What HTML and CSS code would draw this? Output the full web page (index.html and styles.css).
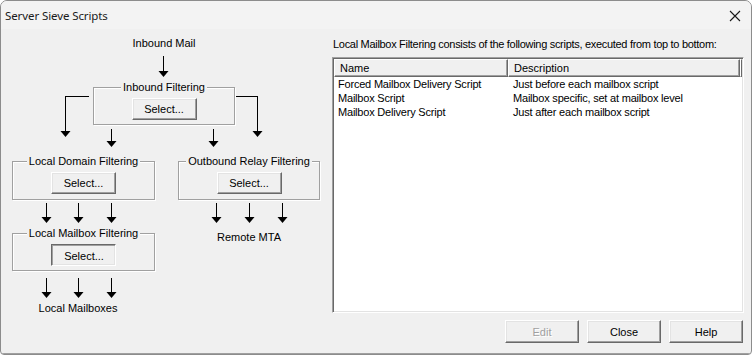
FILE: index.html
```html
<!DOCTYPE html>
<html lang="en">
<head>
    <meta charset="UTF-8">
    <title>Server Sieve Scripts</title>
    <link rel="stylesheet" href="styles.css">
</head>
<body>
    <div class="window">
        <div class="titlebar">
            <span class="title">Server Sieve Scripts</span>
            <svg class="close-x" width="12" height="12" viewBox="0 0 12 12">
                <path d="M1 1 L11 11 M11 1 L1 11" stroke="#1a1a1a" stroke-width="1.1" fill="none"/>
            </svg>
        </div>
        <div class="client">
            <!-- flow diagram -->
            <div class="diagram">
                <svg class="wires" width="323" height="325">
                    <g stroke="#000" stroke-width="1" fill="none" shape-rendering="crispEdges">
                        <path d="M162.5 27 V42"/>
                        <path d="M88 67.5 H64.5 V102"/>
                        <path d="M234 67.5 H256.5 V102"/>
                        <path d="M110.5 100 V112"/>
                        <path d="M212.5 100 V112"/>
                        <path d="M45.5 174 V188"/>
                        <path d="M77.5 174 V188"/>
                        <path d="M110.5 174 V188"/>
                        <path d="M215.5 174 V188"/>
                        <path d="M248.5 174 V188"/>
                        <path d="M281.5 174 V188"/>
                        <path d="M45.5 249 V263"/>
                        <path d="M77.5 249 V263"/>
                        <path d="M110.5 249 V263"/>
                    </g>
                    <g fill="#000">
                        <polygon points="157.5,42 167.5,42 162.5,48"/>
                        <polygon points="59.5,102 69.5,102 64.5,108"/>
                        <polygon points="251.5,102 261.5,102 256.5,108"/>
                        <polygon points="105.5,112 115.5,112 110.5,118"/>
                        <polygon points="207.5,112 217.5,112 212.5,118"/>
                        <polygon points="40.5,188 50.5,188 45.5,194"/>
                        <polygon points="72.5,188 82.5,188 77.5,194"/>
                        <polygon points="105.5,188 115.5,188 110.5,194"/>
                        <polygon points="210.5,188 220.5,188 215.5,194"/>
                        <polygon points="243.5,188 253.5,188 248.5,194"/>
                        <polygon points="276.5,188 286.5,188 281.5,194"/>
                        <polygon points="40.5,263 50.5,263 45.5,269"/>
                        <polygon points="72.5,263 82.5,263 77.5,269"/>
                        <polygon points="105.5,263 115.5,263 110.5,269"/>
                    </g>
                </svg>

                <div class="caption cap-inbound">Inbound Mail</div>

                <div class="group grp-inbound">
                    <div class="legend"><span>Inbound Filtering</span></div>
                    <button class="btn btn-select">Select...</button>
                </div>

                <div class="group grp-domain">
                    <div class="legend"><span>Local Domain Filtering</span></div>
                    <button class="btn btn-select">Select...</button>
                </div>

                <div class="group grp-relay">
                    <div class="legend"><span>Outbound Relay Filtering</span></div>
                    <button class="btn btn-select">Select...</button>
                </div>

                <div class="group grp-mailbox">
                    <div class="legend"><span>Local Mailbox Filtering</span></div>
                    <button class="btn btn-select pressed">Select...</button>
                </div>

                <div class="caption cap-remote">Remote MTA</div>
                <div class="caption cap-mailboxes">Local Mailboxes</div>
            </div>

            <!-- script list -->
            <div class="scripts">
                <p class="intro">Local Mailbox Filtering consists of the following scripts, executed from top to bottom:</p>
                <div class="listview">
                    <div class="lv-header">
                        <div class="lv-col col-name">Name</div>
                        <div class="lv-col col-desc">Description</div>
                        <div class="lv-col col-rest"></div>
                    </div>
                    <div class="lv-row">
                        <span class="col-name">Forced Mailbox Delivery Script</span>
                        <span class="col-desc">Just before each mailbox script</span>
                    </div>
                    <div class="lv-row">
                        <span class="col-name">Mailbox Script</span>
                        <span class="col-desc">Mailbox specific, set at mailbox level</span>
                    </div>
                    <div class="lv-row">
                        <span class="col-name">Mailbox Delivery Script</span>
                        <span class="col-desc">Just after each mailbox script</span>
                    </div>
                </div>
                <div class="actions">
                    <button class="btn btn-action" disabled>Edit</button>
                    <button class="btn btn-action">Close</button>
                    <button class="btn btn-action">Help</button>
                </div>
            </div>
        </div>
    </div>
</body>
</html>
```

FILE: styles.css
```css
body {
    margin: 0;
    padding: 0;
    background: #ffffff;
    font-family: "Liberation Sans", Arial, sans-serif;
    font-size: 11px;
    color: #000;
}
.window {
    width: 750px;
    height: 353px;
    border: 1px solid #8c8c8c;
    border-radius: 7px 7px 4px 4px;
    background: #f0f0f0;
    display: flex;
    flex-direction: column;
    overflow: hidden;
}
.titlebar {
    height: 28px;
    background: #f3f3f3;
    display: flex;
    align-items: center;
    justify-content: space-between;
    padding: 0 10px 0 4px;
    flex-shrink: 0;
}
.title {
    font-family: "Noto Sans", "Open Sans", sans-serif;
    font-size: 11.5px;
    letter-spacing: -0.1px;
    color: #1a1a1a;
}
.close-x {
    margin-top: 1px;
}
.client {
    flex: 1;
    display: flex;
    border-bottom: 1px solid #a0a0a0;
}

/* diagram */
.diagram {
    position: relative;
    width: 323px;
    flex-shrink: 0;
}
.wires {
    position: absolute;
    left: 0;
    top: 0;
}
.caption {
    position: absolute;
    width: 100px;
    text-align: center;
    line-height: 13px;
    white-space: nowrap;
}
.cap-inbound { left: 113px; top: 8px; }
.cap-remote { left: 198px; top: 202px; }
.cap-mailboxes { left: 27px; top: 273px; }

.group {
    position: absolute;
    box-sizing: border-box;
    border: 1px solid #a0a0a0;
    box-shadow: 1px 1px 0 #ffffff, inset 1px 1px 0 #ffffff;
    display: flex;
    justify-content: center;
    align-items: flex-start;
}
.legend {
    position: absolute;
    left: 0;
    right: 0;
    top: -7px;
    display: flex;
    justify-content: center;
    line-height: 13px;
}
.legend span {
    background: #f0f0f0;
    padding: 0 2px;
    white-space: nowrap;
}
.grp-inbound { left: 92px; top: 58px; width: 142px; height: 38px; }
.grp-domain { left: 11px; top: 132px; width: 143px; height: 39px; }
.grp-relay { left: 177px; top: 132px; width: 142px; height: 39px; }
.grp-mailbox { left: 11px; top: 204px; width: 143px; height: 38px; }

/* buttons */
.btn {
    font-family: "Liberation Sans", Arial, sans-serif;
    font-size: 11px;
    color: #000;
    background: #f0f0f0;
    border: 1px solid;
    border-color: #ffffff #696969 #696969 #ffffff;
    box-shadow: inset -1px -1px 0 #a0a0a0, inset 1px 1px 0 #e3e3e3;
    padding: 0;
    margin: 0;
    box-sizing: border-box;
}
.btn-select {
    width: 65px;
    height: 22px;
    margin-top: 10px;
}
.btn-select.pressed {
    border-color: #696969 #ffffff #ffffff #696969;
    box-shadow: inset 1px 1px 0 #a0a0a0, inset -1px -1px 0 #e3e3e3;
    padding: 1px 0 0 1px;
}
.btn:disabled {
    color: #a0a0a0;
    text-shadow: 1px 1px 0 #ffffff;
}

/* script list */
.scripts {
    flex: 1;
    display: flex;
    flex-direction: column;
    padding: 9px 9px 0 8px;
}
.intro {
    margin: 0;
    line-height: 13px;
    padding-left: 1px;
    letter-spacing: -0.3px;
}
.listview {
    margin-top: 6px;
    height: 256px;
    box-sizing: border-box;
    background: #ffffff;
    border: 1px solid;
    border-color: #a0a0a0 #ffffff #ffffff #a0a0a0;
    box-shadow: inset 1px 1px 0 #696969, inset -1px -1px 0 #e3e3e3;
    padding: 1px 1px 0 1px;
}
.lv-header {
    display: flex;
    height: 18px;
}
.lv-col {
    box-sizing: border-box;
    background: #f0f0f0;
    border: 1px solid;
    border-color: #ffffff #696969 #696969 #ffffff;
    box-shadow: inset -1px -1px 0 #a0a0a0;
    padding: 2px 0 0 5px;
    line-height: 13px;
}
.lv-col.col-name { width: 174px; }
.lv-col.col-desc { width: 232px; }
.lv-col.col-rest { flex: 1; padding: 0; }
.lv-row {
    display: flex;
    height: 14px;
    line-height: 14px;
    white-space: nowrap;
    letter-spacing: -0.2px;
}
.lv-row .col-name {
    width: 176px;
    padding-left: 4px;
    box-sizing: border-box;
}
.lv-row .col-desc {
    padding-left: 3px;
}
.actions {
    display: flex;
    justify-content: flex-end;
    gap: 8px;
    margin-top: 7px;
    margin-right: 1px;
}
.btn-action {
    width: 74px;
    height: 23px;
}
```
